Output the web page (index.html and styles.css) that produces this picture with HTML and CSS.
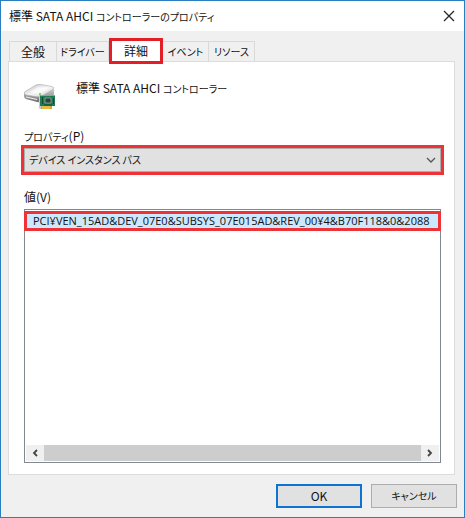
FILE: index.html
```html
<!DOCTYPE html>
<html lang="ja">
<head>
  <meta charset="UTF-8">
  <meta name="viewport" content="width=device-width, initial-scale=1">
  <title>標準 SATA AHCI コントローラーのプロパティ</title>
  <link rel="stylesheet" href="styles.css">
</head>
<body>
  <div class="window">
    <!-- タイトルバー -->
    <header class="titlebar">
      <h1>標準 SATA AHCI <span class="kana">コントローラーのプロパティ</span></h1>
      <button class="close" type="button" aria-label="閉じる">
        <svg width="12" height="12" viewBox="0 0 12 12"><path d="M1 1l10 10M11 1L1 11" fill="none" stroke="#222" stroke-width="1.2"/></svg>
      </button>
    </header>

    <!-- タブ -->
    <div class="tabs" role="tablist">
      <button class="tab general" type="button" role="tab">全般</button>
      <button class="tab driver kana" type="button" role="tab">ドライバー</button>
      <button class="tab active" type="button" role="tab" aria-selected="true">詳細</button>
      <button class="tab event kana" type="button" role="tab">イベント</button>
      <button class="tab resource kana" type="button" role="tab">リソース</button>
    </div>

    <main class="panel">
      <div class="device">
        <svg class="device-icon" width="34" height="28" viewBox="0 0 34 28">
          <defs>
            <linearGradient id="top" x1="0" y1="0" x2="1" y2="1">
              <stop offset="0" stop-color="#b9b9b9"/>
              <stop offset=".5" stop-color="#f6f6f6"/>
              <stop offset="1" stop-color="#cfcfcf"/>
            </linearGradient>
            <linearGradient id="side" x1="0" y1="0" x2="0" y2="1">
              <stop offset="0" stop-color="#d0d0d0"/>
              <stop offset="1" stop-color="#6f6f6f"/>
            </linearGradient>
          </defs>
          <!-- ドライブ -->
          <path d="M0 9v3q0 2 2 3l11 3q2 .5 4-.5L29 12q1-1 1-2V5z" fill="url(#side)"/>
          <path d="M0 9q0-1 2-2L12 1q2-1 5-.5l11 2q3 1 1 3L18 12q-2 1-5 .8L2 11Q0 10 0 9z" fill="url(#top)" stroke="#a8a8a8" stroke-width=".6"/>
          <path d="M6 8l8-5 12 1-10 6z" fill="#fff" opacity=".6"/>
          <path d="M2 13l11 2.500" stroke="#f4f4f4" stroke-width="1"/>
          <!-- 基板 -->
          <path d="M15 10l2 1v14h-1l-1-1z" fill="#c8cbc8"/>
          <path d="M16 11h15v11H16z" fill="#1f7a55"/>
          <path d="M16 11h15v1H16z" fill="#71b78f"/>
          <path d="M21 14h6v5h-6z" fill="#33413b" stroke="#8fbda1" stroke-width=".7"/>
          <path d="M18.500 13v7M29.500 14v6M20 21h8" stroke="#124a35" stroke-width="1"/>
          <path d="M17 22h11v3H17z" fill="#d9a92b"/>
          <path d="M19 22v3M21 22v3M23 22v3M25 22v3" stroke="#fff0a0" stroke-width=".5"/>
          <circle cx="16" cy="10" r="1" fill="#73c63b"/>
        </svg>
        <p class="device-name">標準 SATA AHCI <span class="kana">コントローラー</span></p>
      </div>

      <label class="field-label" for="property"><span class="kana">プロパティ</span>(P)</label>
      <div class="combo">
        <select id="property" class="kana">
          <option>デバイス インスタンス パス</option>
        </select>
        <svg class="chevron" width="10" height="6" viewBox="0 0 10 6"><path d="M1 1l4 4 4-4" fill="none" stroke="#555" stroke-width="1.300"/></svg>
      </div>

      <p class="field-label value-label" id="value-label">値(V)</p>
      <div class="listbox">
        <ul role="listbox" aria-labelledby="value-label">
          <li role="option" aria-selected="true">PCI¥VEN_15AD&amp;DEV_07E0&amp;SUBSYS_07E015AD&amp;REV_00¥4&amp;B70F118&amp;0&amp;2088</li>
        </ul>
        <!-- 横スクロールバー -->
        <div class="scrollbar">
          <button type="button" aria-label="左へ">
            <svg width="6" height="8" viewBox="0 0 6 8"><path d="M5 1L2 4l3 3" fill="none" stroke="#444" stroke-width="1.800"/></svg>
          </button>
          <div class="thumb"></div>
          <button type="button" aria-label="右へ">
            <svg width="6" height="8" viewBox="0 0 6 8"><path d="M1 1l3 3-3 3" fill="none" stroke="#444" stroke-width="1.800"/></svg>
          </button>
        </div>
      </div>
    </main>

    <footer class="actions">
      <button class="btn primary" type="button">OK</button>
      <button class="btn kana" type="button">キャンセル</button>
    </footer>
  </div>
</body>
</html>
```
FILE: styles.css
```css
* { box-sizing: border-box; margin: 0; padding: 0; }

body {
  font-family: "Noto Sans CJK JP", sans-serif;
  font-size: 12px;
  line-height: 16px;
  color: #111;
}

button,
select {
  font-family: inherit;
  font-size: inherit;
  line-height: inherit;
  color: inherit;
}

/* かなは詰め組み */
.kana {
  font-size: 10px;
  font-feature-settings: "palt";
}

.window {
  display: flex;
  flex-direction: column;
  min-height: 100vh;
  background: #f0f0f0;
  border: 1px solid #2a7fc0;
}

/* タイトルバー */
.titlebar {
  display: flex;
  justify-content: space-between;
  align-items: center;
  height: 30px;
  padding: 0 8px;
  background: #fff;
}

.titlebar h1 {
  font-size: 12px;
  font-weight: 400;
  white-space: nowrap;
}

.close {
  display: flex;
  padding: 1px;
  background: none;
  border: none;
}

/* タブ */
.tabs {
  display: flex;
  align-items: flex-end;
  margin: 7px 8px 0;
  height: 23px;
}

.tab {
  height: 20px;
  background: #f0f0f0;
  border: 1px solid #d9d9d9;
  border-bottom: none;
  border-left: none;
  text-align: center;
  white-space: nowrap;
}

.general { width: 48px; border-left: 1px solid #d9d9d9; }
.driver { width: 52px; }
.event { width: 46px; }
.resource { width: 46px; }

.tab.active {
  width: 54px;
  height: 26px;
  margin-bottom: -3px;
  background: #fff;
  border: 3px solid #e21f26;
  z-index: 1;
}

/* タブの中身 */
.panel {
  flex: 1;
  display: flex;
  flex-direction: column;
  margin: 0 9px 0 7px;
  padding: 22px 14px 11px;
  background: #fff;
  border: 1px solid #dcdcdc;
}

.device {
  display: flex;
  gap: 18px;
  height: 44px;
  padding-left: 1px;
}

.device-name {
  margin-top: -4px;
}

.field-label {
  padding-left: 1px;
}

.combo {
  position: relative;
  margin: 0 -4px 0 -2px;
  border: 3px solid #ee3338;
}

.combo select {
  display: block;
  width: 100%;
  height: 24px;
  padding: 0 4px;
  background: #e1e1e1;
  border: 1px solid #adadad;
  border-radius: 0;
  appearance: none;
}

.chevron {
  position: absolute;
  right: 5px;
  top: 9px;
  pointer-events: none;
}

.value-label {
  margin: 14px 0 4px;
}

.listbox {
  flex: 1;
  display: flex;
  flex-direction: column;
  justify-content: space-between;
  margin: 0 -1px 0 1px;
  padding: 1px;
  border: 1px solid #828790;
}

.listbox ul {
  margin: 0 -2px;
  list-style: none;
}

.listbox li {
  height: 20px;
  padding-left: 6px;
  font-family: "Open Sans", "Noto Sans CJK JP", sans-serif;
  font-size: 11px;
  line-height: 14px;
  background: #cce8ff;
  border: 3px solid #ee3338;
  overflow: hidden;
  white-space: nowrap;
}

.scrollbar {
  display: flex;
  height: 16px;
  background: #f0f0f0;
}

.scrollbar button {
  display: flex;
  justify-content: center;
  align-items: center;
  width: 18px;
  background: none;
  border: none;
}

.thumb {
  flex: 1;
  background: #cdcdcd;
}

/* OK / キャンセル */
.actions {
  display: flex;
  justify-content: flex-end;
  gap: 9px;
  padding: 9px 7px;
}

.btn {
  width: 86px;
  height: 24px;
  background: #e1e1e1;
  border: 1px solid #adadad;
}

.btn.primary {
  border: 2px solid #0f74d1;
}
```
